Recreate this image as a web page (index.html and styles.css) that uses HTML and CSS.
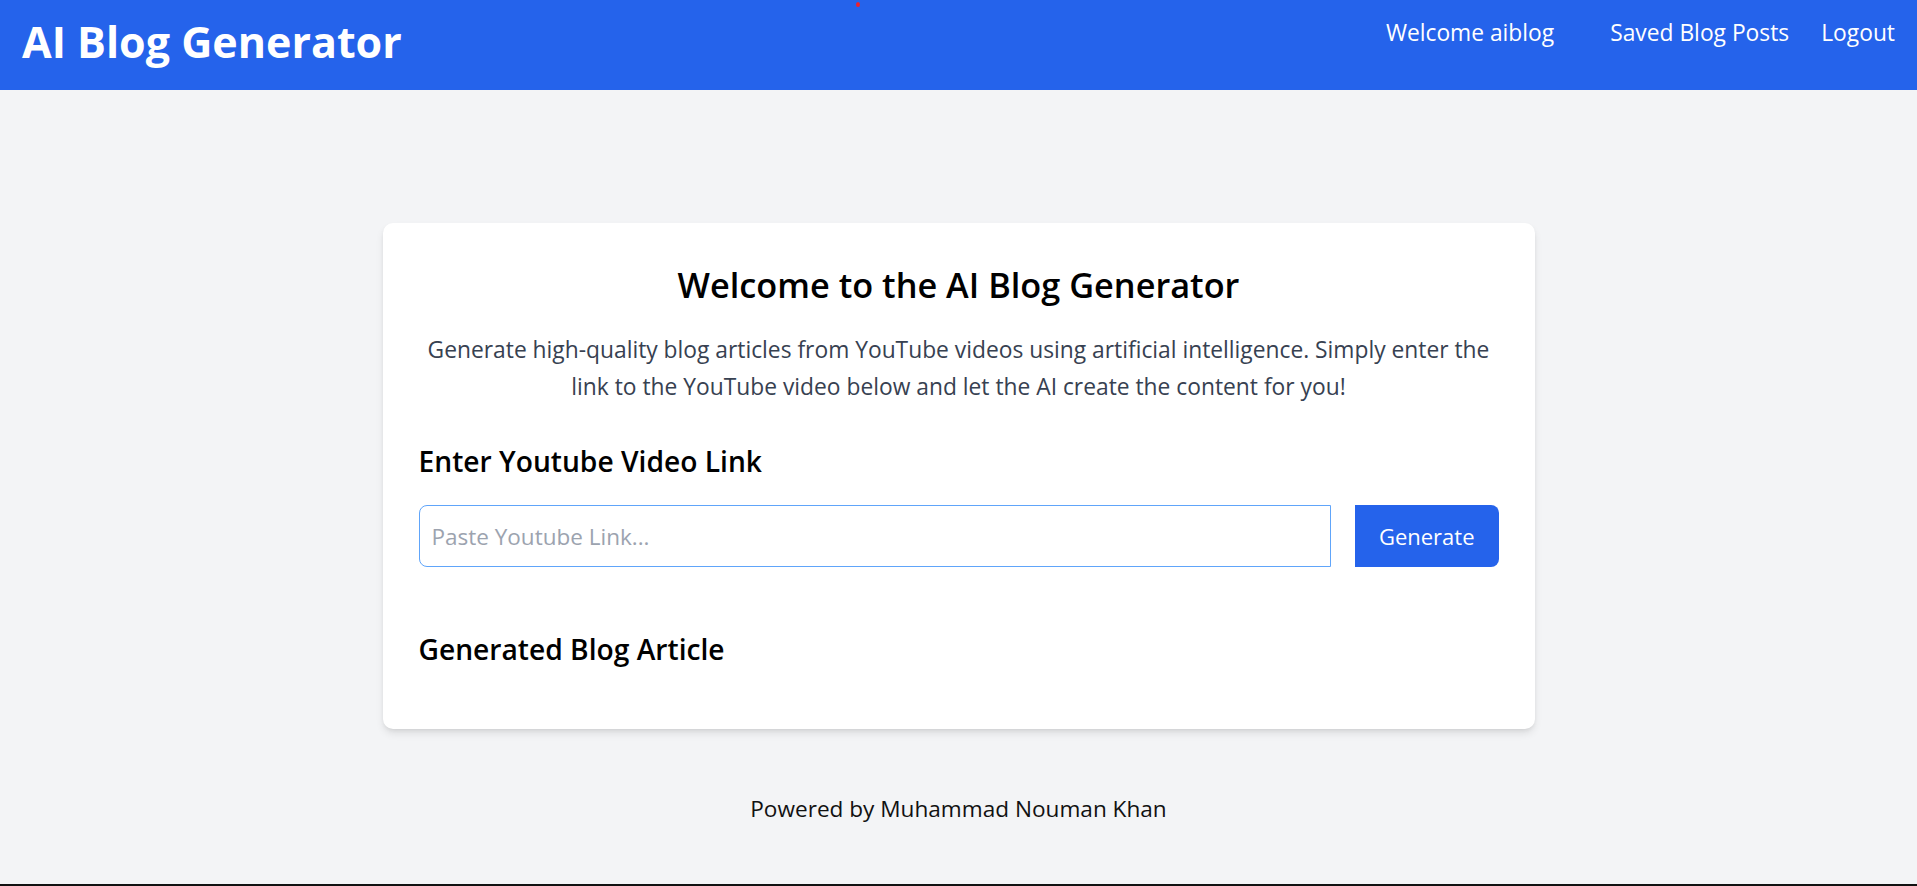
FILE: index.html
```html
<!DOCTYPE html>
<html lang="en">
<head>
<meta charset="utf-8">
<title>AI Blog Generator</title>
<link rel="stylesheet" href="styles.css">
</head>
<body>
<div class="page">
  <header class="topbar">
    <span class="cursor-dot"></span>
    <h1 class="brand">AI Blog Generator</h1>
    <nav class="nav">
      <a class="nav-link nav-welcome" href="#">Welcome aiblog</a>
      <a class="nav-link" href="#">Saved Blog Posts</a>
      <a class="nav-link" href="#">Logout</a>
    </nav>
  </header>

  <main class="main">
    <section class="card">
      <h2 class="card-title">Welcome to the AI Blog Generator</h2>
      <p class="card-intro">Generate high-quality blog articles from YouTube videos using artificial intelligence. Simply enter the link to the YouTube video below and let the AI create the content for you!</p>

      <h3 class="section-title">Enter Youtube Video Link</h3>
      <div class="link-row">
        <input class="link-input" type="url" placeholder="Paste Youtube Link...">
        <button class="generate-btn" type="button">Generate</button>
      </div>

      <h3 class="section-title article-title">Generated Blog Article</h3>
      <div class="blog-content"></div>
    </section>
  </main>

  <footer class="footer">Powered by Muhammad Nouman Khan</footer>
</div>
</body>
</html>
```
FILE: styles.css
```css
* {
  box-sizing: border-box;
}

html, body {
  margin: 0;
  padding: 0;
}

body {
  background: #f3f4f6;
  font-family: "Open Sans", "Noto Sans", sans-serif;
  color: #000;
}

.page {
  min-height: 100vh;
  display: flex;
  flex-direction: column;
  border-bottom: 2px solid #111;
}

/* Header */
.topbar {
  position: relative;
  height: 90px;
  background: #2563eb;
  color: #fff;
  display: flex;
  align-items: flex-start;
  justify-content: space-between;
  padding: 17px 22px 0 22px;
}

.cursor-dot {
  position: absolute;
  left: 856px;
  top: 2px;
  width: 4px;
  height: 5px;
  border-radius: 50%;
  background: #f0202c;
}

.brand {
  margin: 0;
  font-size: 43px;
  line-height: 50px;
  font-weight: 700;
  letter-spacing: 0;
}

.nav {
  display: flex;
  align-items: flex-start;
  gap: 32px;
  margin-top: 1px;
}

.nav-link {
  color: #fff;
  text-decoration: none;
  font-size: 22.8px;
  line-height: 30px;
}

.nav-welcome {
  margin-right: 24px;
}

/* Main */
.main {
  display: flex;
  justify-content: center;
  padding-top: 133px;
}

.card {
  width: 1152px;
  background: #fff;
  border-radius: 10px;
  box-shadow: 0 5px 8px -1px rgba(0, 0, 0, 0.1), 0 2px 5px -2px rgba(0, 0, 0, 0.1);
  padding: 39px 36px;
}

.card-title {
  margin: 0;
  text-align: center;
  font-size: 34.3px;
  line-height: 45px;
  font-weight: 600;
  color: #000;
}

.card-intro {
  margin: 24px 0 0;
  text-align: center;
  font-size: 22.8px;
  line-height: 37px;
  color: #374151;
}

.section-title {
  margin: 37px 0 0;
  font-size: 28.2px;
  line-height: 38px;
  font-weight: 600;
  color: #000;
}

.link-row {
  display: flex;
  gap: 24px;
  margin-top: 25px;
}

.link-input {
  flex: 1;
  height: 62px;
  border: 1px solid #60a5fa;
  border-radius: 8px 0 0 8px;
  padding: 0 12px;
  font-family: inherit;
  font-size: 22.5px;
  color: #111;
  background: #fff;
  outline: none;
}

.link-input::placeholder {
  color: #9ca3af;
}

.generate-btn {
  height: 62px;
  padding: 0 24px;
  border: none;
  border-radius: 0 8px 8px 0;
  background: #2563eb;
  color: #fff;
  font-family: inherit;
  font-size: 22px;
}

.article-title {
  margin-top: 63px;
}

.blog-content {
  margin-top: 22px;
}

/* Footer */
.footer {
  margin-top: 62px;
  text-align: center;
  font-size: 22.6px;
  line-height: 35px;
  color: #111;
}
```
